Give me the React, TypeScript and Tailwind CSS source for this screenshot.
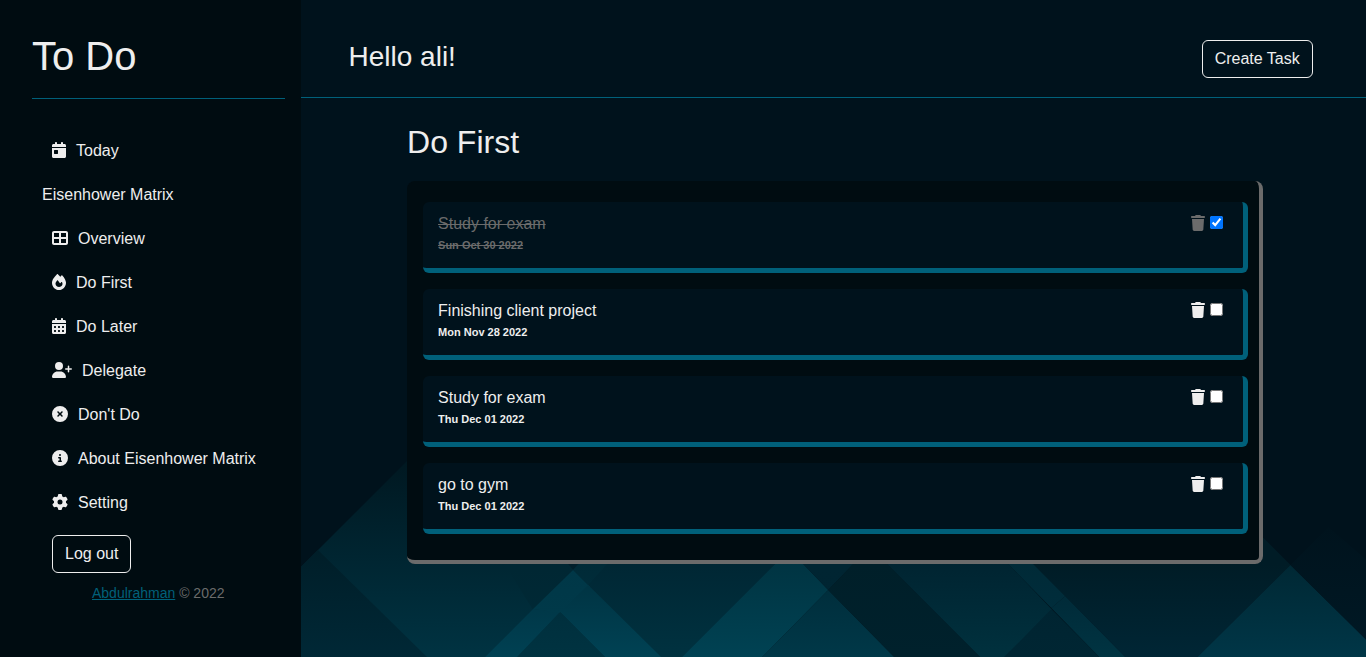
import { useState } from "react";
import type { IconType } from "react-icons";
import {
  FaCalendarDay,
  FaCalendarDays,
  FaCircleInfo,
  FaCircleXmark,
  FaFire,
  FaGear,
  FaTableCellsLarge,
  FaTrash,
  FaUserPlus,
} from "react-icons/fa6";

type NavItem = { label: string; icon?: IconType; size?: string };

const navItems: NavItem[] = [
  { label: "Today", icon: FaCalendarDay, size: "h-4 w-3.5" },
  { label: "Eisenhower Matrix" },
  { label: "Overview", icon: FaTableCellsLarge, size: "h-4 w-4" },
  { label: "Do First", icon: FaFire, size: "h-4 w-3.5" },
  { label: "Do Later", icon: FaCalendarDays, size: "h-4 w-3.5" },
  { label: "Delegate", icon: FaUserPlus, size: "h-4 w-5" },
  { label: "Don't Do", icon: FaCircleXmark, size: "h-4 w-4" },
  { label: "About Eisenhower Matrix", icon: FaCircleInfo, size: "h-4 w-4" },
  { label: "Setting", icon: FaGear, size: "h-4 w-4" },
];

type Task = { id: number; title: string; date: string; done: boolean };

const initialTasks: Task[] = [
  { id: 1, title: "Study for exam", date: "Sun Oct 30 2022", done: true },
  { id: 2, title: "Finishing client project", date: "Mon Nov 28 2022", done: false },
  { id: 3, title: "Study for exam", date: "Thu Dec 01 2022", done: false },
  { id: 4, title: "go to gym", date: "Thu Dec 01 2022", done: false },
];

// Facets of the backdrop: outline, colour at the top, colour at the bottom, top y.
const facets: [string, string, string, number][] = [
  ["301,567 431,437 700,437 700,657 301,657", "#001821", "#003342", 462],
  ["301,567 318,550 427,657 301,657", "#001d27", "#002836", 540],
  ["513,564 568,564 573,570 533,610 490,541", "#002632", "#002b38", 550],
  ["573,570 661,657 700,657 775,564 775,540 570,540", "#002532", "#003240", 550],
  ["568,564 578,564 573,570", "#001e2a", "#001e2a", 564],
  ["485,657 533,609 560,612 517,657", "#003646", "#004153", 600],
  ["533,609 573,570 590,587 560,613", "#003747", "#003b4b", 570],
  ["573,570 579,564 607,564 588,585", "#002a37", "#003341", 564],
  ["588,585 661,657 605,657 560,612", "#003342", "#004254", 580],
  ["560,612 605,657 517,657", "#002f3d", "#003341", 612],
  ["682,657 775,564 803,564 828,590 762,657", "#003442", "#004253", 564],
  ["828,590 894,657 762,657", "#002e3c", "#003848", 590],
  ["803,564 853,564 828,590", "#002532", "#002431", 564],
  ["853,564 887,564 980,657 894,657 828,590", "#001f29", "#00212c", 564],
  ["887,564 1008,564 1052,610 1004,657 980,657", "#002431", "#00313e", 564],
  ["1008,564 1033,564 1065,596 1051,608", "#002a37", "#003040", 564],
  ["1065,596 1125,657 1099,657 1051,608", "#002b39", "#003442", 600],
  ["1051,609 1099,657 1004,657", "#002431", "#002633", 610],
  ["1033,564 1023,538 1263,538 1290,565 1197,657 1125,657", "#001c26", "#002635", 564],
  ["1290,565 1366,640 1366,657 1197,657", "#002834", "#003647", 565],
  ["1290,565 1328,527 1366,560 1366,640", "#00131d", "#001925", 527],
];

function Backdrop() {
  return (
    <svg
      aria-hidden="true"
      className="pointer-events-none absolute inset-x-0 bottom-0 w-full"
      viewBox="301 457 1065 200"
      preserveAspectRatio="xMidYMax slice"
    >
      <defs>
        {facets.map(([, from, to, top], i) => (
          <linearGradient
            key={i}
            id={`facet-${i}`}
            gradientUnits="userSpaceOnUse"
            x1="0"
            x2="0"
            y1={top}
            y2="657"
          >
            <stop offset="0" stopColor={from} />
            <stop offset="1" stopColor={to} />
          </linearGradient>
        ))}
      </defs>
      {facets.map(([points], i) => (
        <polygon key={i} points={points} fill={`url(#facet-${i})`} />
      ))}
    </svg>
  );
}

function Sidebar() {
  return (
    <aside className="w-[22%] shrink-0 bg-[#000c11] pr-4 pl-8">
      <h1 className="border-b border-[#00607a] pt-8 pb-[18px] text-[40px] leading-12">To Do</h1>
      <nav className="pt-[30px]">
        <ul>
          {navItems.map(({ label, icon: Icon, size }) => (
            <li key={label}>
              {Icon ? (
                <a href="#" className="flex items-center gap-2.5 py-2.5 pl-5 leading-6">
                  <Icon className={`${size} mb-0.5`} />
                  {label}
                </a>
              ) : (
                <span className="block p-2.5 leading-6">{label}</span>
              )}
            </li>
          ))}
        </ul>
      </nav>
      <button
        type="button"
        className="mt-2.5 ml-5 rounded-md border border-[#eee] px-3 py-1.5 leading-6"
      >
        Log out
      </button>
      <p className="mt-2.5 text-center text-sm text-[#6b6b6b]">
        <a href="#" className="text-[#00607a] underline">
          Abdulrahman
        </a>{" "}
        © 2022
      </p>
    </aside>
  );
}

export default function App() {
  const [tasks, setTasks] = useState(initialTasks);

  const toggle = (id: number) =>
    setTasks((list) => list.map((t) => (t.id === id ? { ...t, done: !t.done } : t)));
  const remove = (id: number) => setTasks((list) => list.filter((t) => t.id !== id));

  return (
    <div className="flex min-h-screen bg-[#00121c] font-['Liberation_Sans',Arial,sans-serif] text-base text-[#eee]">
      <Sidebar />
      <main className="relative grow">
        <Backdrop />
        <div className="relative">
          <header className="flex items-start justify-between border-b border-[#00607a] pt-10 pr-[5%] pb-[19px] pl-12">
            <h2 className="text-[28px] leading-[34px]">Hello ali!</h2>
            <button
              type="button"
              className="rounded-md border border-[#eee] px-3 py-1.5 leading-6"
            >
              Create Task
            </button>
          </header>
          <section className="mx-auto w-4/5 pt-6">
            <h2 className="text-[32px] leading-10">Do First</h2>
            <ul className="mt-[19px] -mr-1 flex flex-col gap-4 rounded-lg border-r-4 border-b-4 border-[#6b6b6b] bg-[#000c11] pt-[21px] pr-[11px] pb-[26px] pl-4">
              {tasks.map((task) => (
                <li
                  key={task.id}
                  className="flex items-start justify-between rounded-md border-r-[5px] border-b-[5px] border-[#00607a] bg-[#00121c] pt-2.5 pr-5 pb-[15px] pl-[15px]"
                >
                  <div className={task.done ? "text-[#6b6b6b] line-through" : ""}>
                    <label htmlFor={`task-${task.id}`} className="block leading-6">
                      {task.title}
                    </label>
                    <p className="mt-px text-[11px] leading-4 font-bold">{task.date}</p>
                  </div>
                  <div className="flex items-start gap-[5px] pt-[3px]">
                    <button
                      type="button"
                      aria-label="Delete task"
                      onClick={() => remove(task.id)}
                      className={task.done ? "text-[#6b6b6b]" : ""}
                    >
                      <FaTrash className="h-4 w-3.5" />
                    </button>
                    <input
                      id={`task-${task.id}`}
                      type="checkbox"
                      checked={task.done}
                      onChange={() => toggle(task.id)}
                      className="mt-px size-[13px]"
                    />
                  </div>
                </li>
              ))}
            </ul>
          </section>
        </div>
      </main>
    </div>
  );
}
